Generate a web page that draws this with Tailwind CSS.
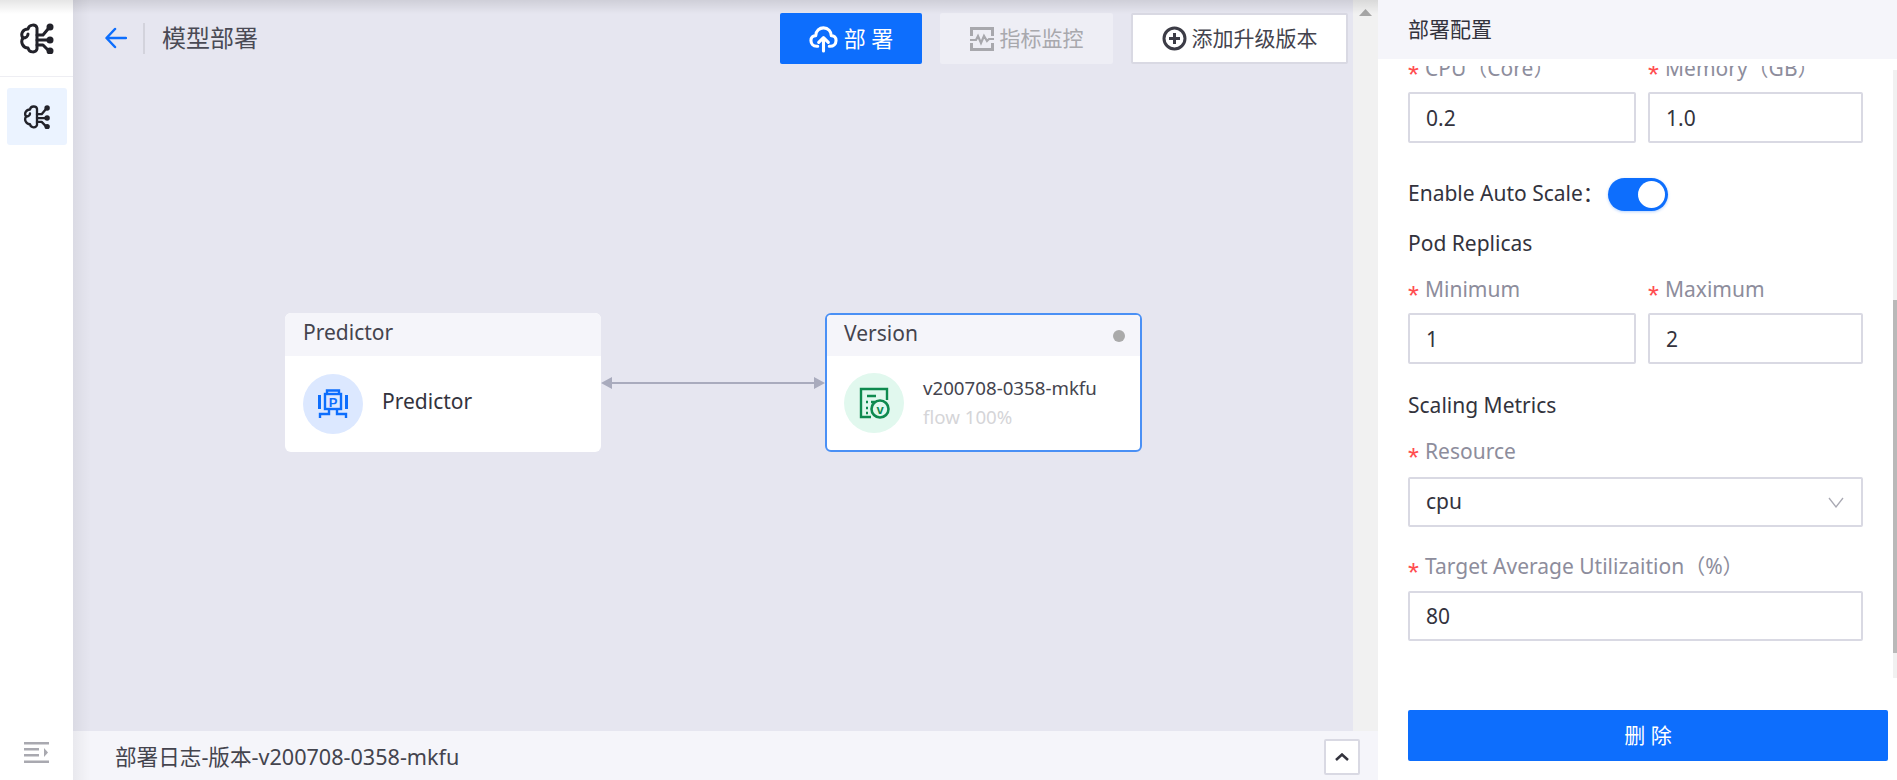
<!DOCTYPE html>
<html lang="zh">
<head>
<meta charset="utf-8">
<script src="https://cdn.jsdelivr.net/npm/@tailwindcss/browser@4"></script>
</head>
<body class="m-0">
<div class="relative flex h-[780px] w-[1897px] overflow-hidden bg-white text-[21px] text-[#33333d] font-['Noto_Sans','Noto_Sans_CJK_SC',sans-serif]">

  <!-- sidebar -->
  <aside class="flex w-[73px] shrink-0 flex-col items-center bg-white">
    <div class="flex h-[77px] w-full items-center justify-center border-b border-[#eeeef3]">
      <svg class="h-[32px] w-[36px]" viewBox="0 0 36 32" fill="none" stroke="#22222a" stroke-width="3" stroke-linecap="round" stroke-linejoin="round">
        <path d="M18 6C17 2 10 2 9 7C4 7 1 12 4 16C1 20 4 26 9 26C10 31 17 31 18 27V6Z"/>
        <path d="M4 16C7 16 9 14 9 12M18 13H24L29 7M18 18H29M18 23H24L29 28"/>
        <circle cx="31" cy="5" r="3.500" fill="#22222a" stroke="none"/><circle cx="31" cy="18" r="3.500" fill="#22222a" stroke="none"/><circle cx="31" cy="29" r="3.500" fill="#22222a" stroke="none"/>
      </svg>
    </div>
    <div class="mt-[11px] flex h-[57px] w-[60px] items-center justify-center rounded-[3px] bg-[#ebf3ff]">
      <svg class="h-[25px] w-[28px]" viewBox="0 0 36 32" fill="none" stroke="#22222a" stroke-width="3" stroke-linecap="round" stroke-linejoin="round">
        <path d="M18 6C17 2 10 2 9 7C4 7 1 12 4 16C1 20 4 26 9 26C10 31 17 31 18 27V6Z"/>
        <path d="M4 16C7 16 9 14 9 12M18 13H24L29 7M18 18H29M18 23H24L29 28"/>
        <circle cx="31" cy="5" r="3.500" fill="#22222a" stroke="none"/><circle cx="31" cy="18" r="3.500" fill="#22222a" stroke="none"/><circle cx="31" cy="29" r="3.500" fill="#22222a" stroke="none"/>
      </svg>
    </div>
    <svg class="mt-auto mb-[17px] h-[21px] w-[25px]" viewBox="0 0 25 21" fill="#a9a9b0">
      <rect x="0" y="0" width="25" height="2.500"/><rect x="0" y="6" width="15" height="2.500"/><rect x="0" y="12" width="15" height="2.500"/><rect x="0" y="18.500" width="25" height="2.500"/><path d="M20 6l4 4.500-4 4.500z"/>
    </svg>
  </aside>

  <!-- main column -->
  <div class="relative flex w-[1305px] shrink-0 flex-col">
    <div class="flex min-h-0 flex-1">
      <main class="relative flex-1 bg-[#e6e6f0]">
        <div class="flex h-[77px] items-start pt-[13px] pr-[5px] pl-[32px]">
          <svg class="mt-[14px] h-[22px] w-[22px]" viewBox="0 0 22 22" fill="none" stroke="#0d6efd" stroke-width="2.500" stroke-linecap="round" stroke-linejoin="round"><path d="M10 2 1.500 11 10 20M2 11H21"/></svg>
          <div class="mt-[10px] ml-[16px] h-[31px] w-[2px] bg-[#d3d3dc]"></div>
          <div class="ml-[17px] text-[24px] leading-[50px] text-[#4a4a55]">模型部署</div>
          <button class="ml-auto flex h-[51px] w-[142px] items-center justify-center gap-[6px] rounded-[2px] bg-[#0d6efd] text-[22px] text-white">
            <svg class="h-[28px] w-[29px]" viewBox="0 0 30 29" fill="none" stroke="#fff" stroke-width="3.200" stroke-linecap="round" stroke-linejoin="round"><path d="M9 22H8C4 22 2 19 2 16C2 13 4 11 7 11C7 6 11 3 15 3C20 3 23 7 23 11C26 11 28 13 28 16C28 20 25 22 22 22H21"/><path d="M15 27V14M10 18l5-5 5 5"/></svg>
            <span>部 署</span>
          </button>
          <button class="ml-[18px] flex h-[51px] w-[173px] items-center justify-center gap-[6px] rounded-[2px] bg-[#eeeef5] text-[21px] text-[#a8a8ad]">
            <svg class="h-[24px] w-[24px]" viewBox="0 0 24 24" fill="none" stroke="#a8a8ad" stroke-width="3"><path d="M1.500 9V1.500H22.500V9M1.500 16V22.500H22.500V16"/><path d="M0 13H6L8 9 11 16 14 9 17 14 19 12H24" stroke-width="2.200"/></svg>
            <span>指标监控</span>
          </button>
          <button class="ml-[18px] flex h-[51px] w-[217px] items-center justify-center gap-[5px] rounded-[2px] border-2 border-[#d9d9e3] bg-white text-[21px] text-[#44444e]">
            <svg class="h-[25px] w-[25px]" viewBox="0 0 25 25" fill="none" stroke="#3c3c46" stroke-width="3"><circle cx="12.500" cy="12.500" r="10.500"/><path d="M12.500 7V18M7 12.500H18"/></svg>
            <span>添加升级版本</span>
          </button>
        </div>

        <!-- diagram nodes -->
        <div class="absolute top-[313px] left-[212px] h-[139px] w-[316px] overflow-hidden rounded-[6px] bg-white">
          <div class="flex h-[43px] items-center bg-[#f5f5fa] pb-[4px] pl-[18px] text-[21px] leading-none text-[#44444e]">Predictor</div>
          <div class="flex h-[96px] items-center pl-[18px]">
            <div class="flex h-[60px] w-[60px] items-center justify-center rounded-full bg-[#dce8ff]">
              <svg class="h-[30px] w-[30px]" viewBox="0 0 30 30" fill="none" stroke="#0d6efd" stroke-width="2.400">
                <path d="M9 5V1.500H21V5"/><rect x="7" y="5" width="16" height="15"/><path d="M1.500 6V20M28.500 6V20" stroke-width="3"/>
                <path d="M11 20V25H2V29M19 20V25H28V29"/>
                <text x="15" y="18" font-size="13" font-weight="700" fill="#0d6efd" stroke="none" text-anchor="middle" font-family="Liberation Sans">P</text>
              </svg>
            </div>
            <div class="ml-[19px] pb-[4px] text-[21px] text-[#33333d]">Predictor</div>
          </div>
        </div>

        <svg class="absolute top-[375px] left-[528px] h-[16px] w-[224px]" viewBox="0 0 224 16" fill="#a9abbd">
          <rect x="8" y="7" width="208" height="2"/><path d="M0 8 11 2V14zM224 8 213 2V14z"/>
        </svg>

        <div class="absolute top-[313px] left-[752px] h-[139px] w-[317px] overflow-hidden rounded-[6px] border-2 border-[#4a90f5] bg-white">
          <div class="flex h-[41px] items-center justify-between bg-[#f5f5fa] pr-[15px] pl-[17px] text-[21px] leading-none text-[#44444e]">
            <span class="pb-[4px]">Version</span><span class="h-[12px] w-[12px] rounded-full bg-[#aaaaaa]"></span>
          </div>
          <div class="flex h-[94px] items-center pl-[17px]">
            <div class="flex h-[60px] w-[60px] items-center justify-center rounded-full bg-[#e1f8ee]">
              <svg class="h-[32px] w-[32px]" viewBox="0 0 32 32" fill="none" stroke="#0f8a4f" stroke-width="2.400">
                <path d="M29 13V2H3V30H13"/><path d="M9 9H18M8 15H10M13 15H17M8 21H10M8 26H10"/>
                <circle cx="22" cy="22" r="8.500" stroke-width="2.600"/>
                <text x="22" y="26.500" font-size="13" font-weight="700" fill="#0f8a4f" stroke="none" text-anchor="middle" font-family="Liberation Sans">v</text>
              </svg>
            </div>
            <div class="ml-[19px] flex flex-col pb-[2px]">
              <div class="text-[18.700px] leading-[29px] text-[#44444e]">v200708-0358-mkfu</div>
              <div class="text-[18.700px] leading-[29px] text-[#d5d5d8]">flow 100%</div>
            </div>
          </div>
        </div>
      </main>
      <div class="relative w-[25px] bg-[#f1f1f1]">
        <svg class="absolute top-[9px] left-[6px] h-[7px] w-[13px]" viewBox="0 0 13 7" fill="#a6a6a6"><path d="M6.500 0 13 7H0z"/></svg>
      </div>
    </div>
    <div class="flex h-[49px] items-center justify-between bg-[#f5f5fa] pt-[3px] pr-[18px] pl-[42px]">
      <span class="text-[21.600px] text-[#44444e]">部署日志-版本-v200708-0358-mkfu</span>
      <button class="flex h-[36px] w-[36px] items-center justify-center rounded-[2px] border-2 border-[#d9d9e3] bg-white">
        <svg class="h-[8px] w-[14px]" viewBox="0 0 14 8" fill="none" stroke="#33333d" stroke-width="2.500"><path d="M1 7 7 1.500 13 7"/></svg>
      </button>
    </div>
    <div class="pointer-events-none absolute inset-y-0 left-0 w-[18px] bg-gradient-to-r from-black/5 to-transparent"></div>
  </div>

  <!-- config panel -->
  <section class="relative flex w-[519px] shrink-0 flex-col bg-white">
    <div class="relative z-10 flex h-[59px] shrink-0 items-center bg-[#f5f5fa] pl-[30px] text-[21px] text-[#33333d]">部署配置</div>
    <div class="mt-[7px] h-[644px] overflow-hidden pl-[30px]">
      <div class="-mt-[10px] w-[455px]">
        <div class="grid grid-cols-[228px_215px] gap-x-[12px]">
          <div>
            <label class="flex h-[24px] translate-y-[1px] items-center text-[#8d8d9c]"><span class="w-[17px] translate-y-[6px] font-['Liberation_Sans'] text-[28px] leading-none text-[#ff4d4f]">*</span>CPU（Core）</label>
            <div class="mt-[12px] flex h-[51px] items-center rounded-[2px] border-2 border-[#d9d9e3] pt-[2px] pl-[16px]">0.2</div>
          </div>
          <div>
            <label class="flex h-[24px] translate-y-[1px] items-center text-[#8d8d9c]"><span class="w-[17px] translate-y-[6px] font-['Liberation_Sans'] text-[28px] leading-none text-[#ff4d4f]">*</span>Memory（GB）</label>
            <div class="mt-[12px] flex h-[51px] items-center rounded-[2px] border-2 border-[#d9d9e3] pt-[2px] pl-[16px]">1.0</div>
          </div>
        </div>
        <div class="mt-[35px] flex h-[33px] items-center">
          <span class="mr-[4px] pb-[2px]">Enable Auto Scale：</span>
          <span class="flex h-[33px] w-[60px] items-center justify-end rounded-full bg-[#0d6efd] pr-[3px] shadow-[0_1px_3px_rgba(13,110,253,0.3)]"><span class="h-[27px] w-[27px] rounded-full bg-white"></span></span>
        </div>
        <div class="mt-[19px] h-[27px] leading-[27px]">Pod Replicas</div>
        <div class="mt-[20px] grid grid-cols-[228px_215px] gap-x-[12px]">
          <div>
            <label class="flex h-[24px] translate-y-[1px] items-center text-[#8d8d9c]"><span class="w-[17px] translate-y-[6px] font-['Liberation_Sans'] text-[28px] leading-none text-[#ff4d4f]">*</span>Minimum</label>
            <div class="mt-[12px] flex h-[51px] items-center rounded-[2px] border-2 border-[#d9d9e3] pt-[2px] pl-[16px]">1</div>
          </div>
          <div>
            <label class="flex h-[24px] translate-y-[1px] items-center text-[#8d8d9c]"><span class="w-[17px] translate-y-[6px] font-['Liberation_Sans'] text-[28px] leading-none text-[#ff4d4f]">*</span>Maximum</label>
            <div class="mt-[12px] flex h-[51px] items-center rounded-[2px] border-2 border-[#d9d9e3] pt-[2px] pl-[16px]">2</div>
          </div>
        </div>
        <div class="mt-[28px] h-[27px] leading-[27px]">Scaling Metrics</div>
        <label class="mt-[21px] flex h-[24px] items-center text-[#8d8d9c]"><span class="w-[17px] translate-y-[6px] font-['Liberation_Sans'] text-[28px] leading-none text-[#ff4d4f]">*</span>Resource</label>
        <div class="mt-[13px] flex h-[50px] items-center justify-between rounded-[2px] border-2 border-[#d9d9e3] pr-[17px] pl-[16px]">
          <span>cpu</span>
          <svg class="h-[11px] w-[16px]" viewBox="0 0 16 11" fill="none" stroke="#a9a9b3" stroke-width="1.300"><path d="M1 1 8 10 15 1"/></svg>
        </div>
        <label class="mt-[28px] flex h-[24px] items-center text-[#8d8d9c]"><span class="w-[17px] translate-y-[6px] font-['Liberation_Sans'] text-[28px] leading-none text-[#ff4d4f]">*</span>Target Average Utilizaition（%）</label>
        <div class="mt-[12px] flex h-[50px] items-center rounded-[2px] border-2 border-[#d9d9e3] pt-[2px] pl-[16px]">80</div>
      </div>
    </div>
    <button class="absolute top-[710px] left-[30px] h-[51px] w-[480px] rounded-[2px] bg-[#0d6efd] text-[21px] text-white">删 除</button>
    <div class="absolute top-[70px] right-0 h-[608px] w-[4px] bg-[#f1f1f1]"><div class="mt-[230px] h-[353px] w-full bg-[#b9b9b9]"></div></div>
  </section>

  <div class="pointer-events-none absolute inset-x-0 top-0 h-[14px] bg-gradient-to-b from-black/10 to-transparent"></div>
</div>
</body>
</html>
